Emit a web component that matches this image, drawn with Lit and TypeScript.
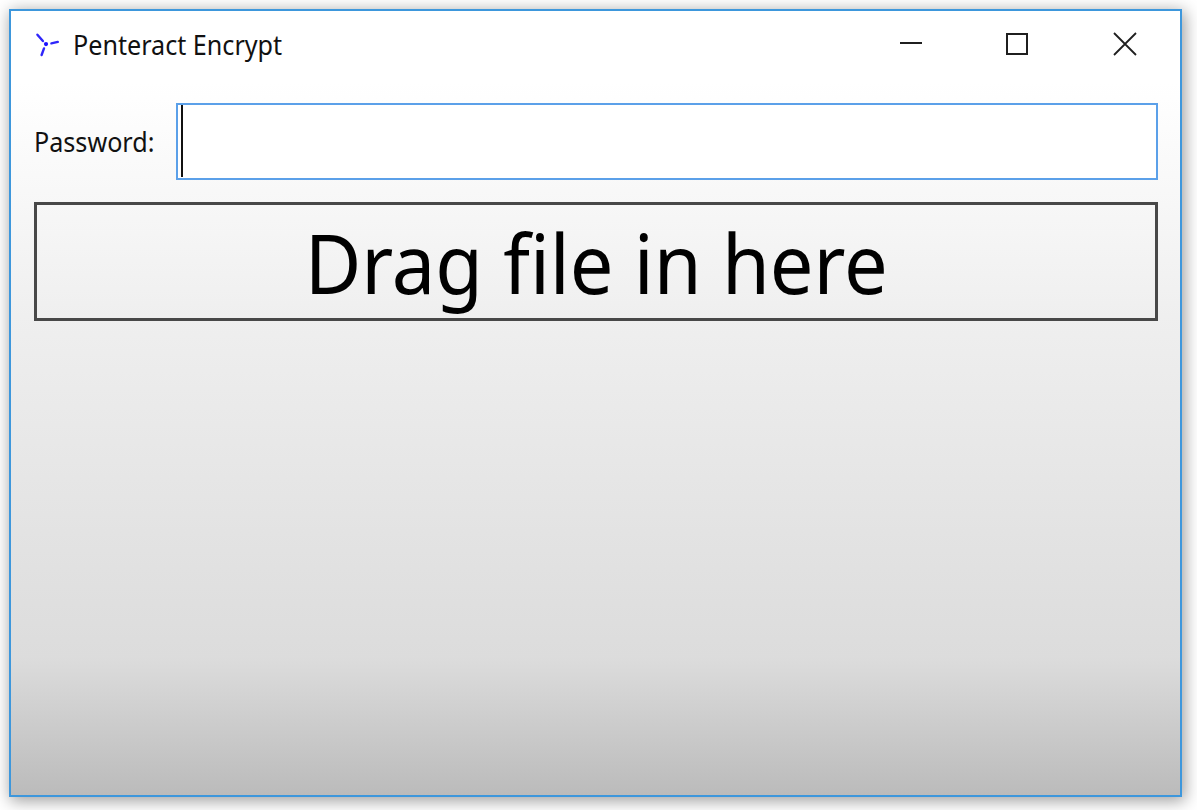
import { LitElement, html, css } from 'lit';
import { customElement, property } from 'lit/decorators.js';

@customElement('title-bar')
export class TitleBar extends LitElement {
  @property({ type: String }) label = '';

  static styles = css`
    :host {
      display: flex;
      align-items: center;
      height: 67px;
      padding-left: 23px;
      padding-right: 42px;
    }
    svg {
      display: block;
      flex: none;
    }
    .title {
      flex: 1;
      margin-left: 11px;
    }
    .text {
      display: inline-block;
      transform: scaleX(0.914);
      transform-origin: left center;
      white-space: nowrap;
    }
    .controls {
      display: flex;
      align-items: center;
      gap: 82px;
      padding-bottom: 2px;
    }
  `;

  render() {
    return html`
      <svg class="logo" width="28" height="28" viewBox="0 0 28 28" fill="none" stroke="#2f26fa" stroke-width="2.4" stroke-linecap="round">
        <path d="M3.4 3.7 8.9 10M17.4 12.4l6.4-1.5M10 17.4 7.6 24" />
        <circle cx="12" cy="13.1" r="2.1" fill="#1c10ff" stroke="none" />
      </svg>
      <div class="title"><span class="text">${this.label}</span></div>
      <div class="controls">
        <svg width="26" height="26" viewBox="0 0 26 26" fill="none" stroke="#1f1f1f" stroke-width="2">
          <path d="M4 12H26" />
        </svg>
        <svg width="26" height="26" viewBox="0 0 26 26" fill="none" stroke="#1f1f1f" stroke-width="2">
          <rect x="3" y="3" width="20" height="20" />
        </svg>
        <svg width="26" height="26" viewBox="0 0 26 26" fill="none" stroke="#1f1f1f" stroke-width="1.8">
          <path d="M2 2 24 24M24 2 2 24" />
        </svg>
      </div>
    `;
  }
}

@customElement('password-field')
export class PasswordField extends LitElement {
  @property({ type: String }) label = '';

  static styles = css`
    :host {
      display: flex;
      height: 77px;
    }
    .label {
      width: 142px;
      line-height: 78px;
      flex: none;
    }
    .text {
      display: inline-block;
      transform: scaleX(0.914);
      transform-origin: left center;
      white-space: nowrap;
    }
    .field {
      flex: 1;
      box-sizing: border-box;
      border: 2px solid #5ba0e9;
      background: #fff;
      padding: 0 3px;
    }
    .caret {
      width: 2px;
      height: 72px;
      background: #111;
    }
  `;

  render() {
    return html`
      <div class="label"><span class="text">${this.label}</span></div>
      <div class="field"><div class="caret"></div></div>
    `;
  }
}

@customElement('drop-zone')
export class DropZone extends LitElement {
  @property({ type: String }) label = '';

  static styles = css`
    :host {
      display: flex;
      align-items: center;
      justify-content: center;
      box-sizing: border-box;
      height: 119px;
      border: 3px solid #484848;
      color: #000;
      font-size: 82px;
    }
    .text {
      flex: none;
      line-height: 1;
      transform: scaleX(0.946);
      white-space: nowrap;
    }
  `;

  render() {
    return html`<span class="text">${this.label}</span>`;
  }
}

@customElement('app-root')
export class AppRoot extends LitElement {
  static styles = css`
    :host {
      display: block;
      box-sizing: border-box;
      width: 1197px;
      height: 810px;
      padding: 9px 15px 13px 9px;
      overflow: hidden;
      background: #fff;
      color: #111;
      font-family: 'Noto Sans', 'Open Sans', sans-serif;
      font-size: 27.5px;
    }
    .window {
      box-sizing: border-box;
      height: 100%;
      border: 2px solid #3d97dc;
      background: linear-gradient(#fff 9%, #f8f8f8 23%, #efefef 39%, #dcdcdc 82.5%, #bbb 100%);
      box-shadow: 2px 3px 15px 1px rgba(0, 0, 0, 0.38);
    }
    .content {
      display: flex;
      flex-direction: column;
      gap: 22px;
      padding: 25px 22px 0 23px;
    }
  `;

  render() {
    return html`
      <div class="window">
        <title-bar label="Penteract Encrypt"></title-bar>
        <div class="content">
          <password-field label="Password:"></password-field>
          <drop-zone label="Drag file in here"></drop-zone>
        </div>
      </div>
    `;
  }
}

declare global {
  interface HTMLElementTagNameMap {
    'title-bar': TitleBar;
    'password-field': PasswordField;
    'drop-zone': DropZone;
    'app-root': AppRoot;
  }
}
